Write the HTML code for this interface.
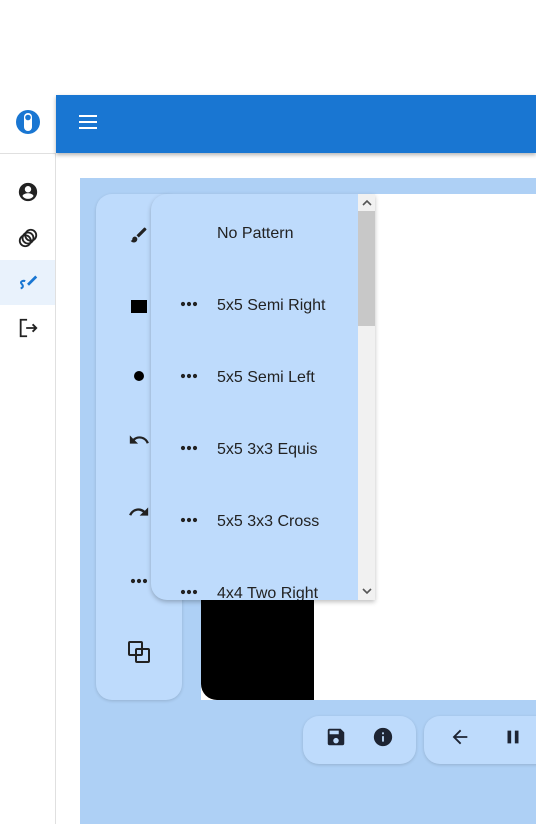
<!DOCTYPE html>
<html><head><style>
*{margin:0;padding:0;box-sizing:border-box}
body{width:536px;height:824px;overflow:hidden;background:#fff;font-family:"Liberation Sans",Arial,sans-serif;position:relative}
.a{position:absolute}
svg{display:block}
</style></head><body>
<div class="a" style="left:0;top:153px;width:56px;height:1px;background:#e0e0e0"></div>
<div class="a" style="left:55px;top:153px;width:1px;height:671px;background:#e0e0e0"></div>
<div class="a" style="left:56px;top:95px;width:480px;height:58px;background:#1976d2;box-shadow:0 2px 4px rgba(0,0,0,.3)"></div>
<svg class="a" style="left:78px;top:113px" width="20" height="18"><rect x="1" y="2" width="18" height="2" fill="#fff"/><rect x="1" y="8" width="18" height="2" fill="#fff"/><rect x="1" y="14" width="18" height="2" fill="#fff"/></svg>
<svg class="a" style="left:15px;top:109px" width="26" height="26"><circle cx="13" cy="13" r="12" fill="#1976d2"/><rect x="9" y="4" width="8" height="18" rx="4" fill="#fff"/><circle cx="13" cy="8.5" r="2.8" fill="#1976d2"/></svg>
<svg class="a" style="left:17px;top:181px" width="22" height="22" viewBox="0 0 24 24"><path fill="#222" d="M12 2a10 10 0 100 20 10 10 0 000-20zm0 3.5a3.5 3.5 0 110 7 3.5 3.5 0 010-7zM12 19.5a7.5 7.5 0 01-6-3c.03-2 4-3.1 6-3.1s5.97 1.1 6 3.1a7.5 7.5 0 01-6 3z"/></svg>
<svg class="a" style="left:17px;top:227px" width="22" height="22" viewBox="0 0 24 24" fill="none" stroke="#222" stroke-width="2"><circle cx="9" cy="15" r="6"/><circle cx="12" cy="12" r="6"/><circle cx="15" cy="9" r="6"/></svg>
<div class="a" style="left:0;top:260px;width:55px;height:45px;background:#e9f2fc"></div>
<svg class="a" style="left:17px;top:271px" width="22" height="22" viewBox="0 0 24 24" fill="none" stroke="#1976d2" stroke-width="2.2"><path d="M9 11c-3-1-6 1-4 3s2 4-1 5"/><path d="M12 15l9-9" stroke-width="3"/></svg>
<svg class="a" style="left:17px;top:317px" width="22" height="22" viewBox="0 0 24 24" fill="none" stroke="#222" stroke-width="2"><path d="M11 3H4v18h7M10 12h11M17 8l4 4-4 4"/></svg>
<div class="a" style="left:80px;top:178px;width:456px;height:646px;background:#aed0f5"></div>
<div class="a" style="left:201px;top:194px;width:335px;height:506px;background:#fff"></div>
<div class="a" style="left:201px;top:600px;width:113px;height:100px;background:#000;border-bottom-left-radius:16px"></div>
<div class="a" style="left:96px;top:194px;width:86px;height:506px;background:#bedbfc;border-radius:16px;box-shadow:0 1px 3px rgba(0,0,0,.15)"></div>
<svg class="a" style="left:129px;top:225px" width="20" height="20" viewBox="0 0 24 24"><path fill="#222" d="M7 14c-1.7 0-3 1.3-3 3 0 1.3-1.2 2-2 2 .9 1.2 2.5 2 4 2 2.2 0 4-1.8 4-4 0-1.7-1.3-3-3-3zm13.7-9.4l-1.3-1.3a1 1 0 00-1.4 0L9 12.3 11.7 15l9-9a1 1 0 000-1.4z"/></svg>
<div class="a" style="left:131px;top:300px;width:16px;height:13px;background:#000"></div>
<div class="a" style="left:134px;top:371px;width:10px;height:10px;border-radius:50%;background:#000"></div>
<svg class="a" style="left:128px;top:429px" width="22" height="22" viewBox="0 0 24 24"><path fill="#222" d="M12.5 8c-2.7 0-5 1-7 2.6L2 7v9h9l-3.6-3.6A8 8 0 0120.4 16l2.4-.8C21.3 10.9 17.3 8 12.5 8z"/></svg>
<svg class="a" style="left:128px;top:501px" width="22" height="22" viewBox="0 0 24 24"><path fill="#222" d="M18.4 10.6A10.5 10.5 0 0011.5 8C6.8 8 2.8 10.9 1.2 15.2l2.4.8a8 8 0 0112.7-3.6L12.7 16H22V7z"/></svg>
<svg class="a" style="left:130px;top:578px" width="18" height="6"><circle cx="3" cy="3" r="2.1" fill="#222"/><circle cx="9" cy="3" r="2.1" fill="#222"/><circle cx="15" cy="3" r="2.1" fill="#222"/></svg>
<svg class="a" style="left:127px;top:640px" width="24" height="24" viewBox="0 0 24 24" fill="none" stroke="#222" stroke-width="2"><rect x="2" y="2" width="13" height="13" rx="1"/><rect x="9" y="9" width="13" height="13" rx="1"/></svg>
<div class="a" style="left:151px;top:194px;width:224px;height:406px;background:#bedbfc;border-radius:16px 0 0 16px;box-shadow:0 2px 5px rgba(0,0,0,.25);overflow:hidden">
<div class="a" style="left:207px;top:0;width:17px;height:406px;background:#f1f1f1"></div>
<div class="a" style="left:207px;top:17px;width:17px;height:115px;background:#c8c8c8"></div>
<svg class="a" style="left:211px;top:5px" width="10" height="8"><path d="M1 6l4-4 4 4" fill="none" stroke="#555" stroke-width="1.6"/></svg>
<svg class="a" style="left:211px;top:393px" width="10" height="8"><path d="M1 2l4 4 4-4" fill="none" stroke="#555" stroke-width="1.6"/></svg>
<div style="font-size:16px;color:#222">
<div class="a" style="left:66px;top:31px">No Pattern</div>
<svg class="a" style="left:29px;top:107px" width="18" height="6"><circle cx="3" cy="3" r="2.1" fill="#222"/><circle cx="9" cy="3" r="2.1" fill="#222"/><circle cx="15" cy="3" r="2.1" fill="#222"/></svg><div class="a" style="left:66px;top:103px">5x5 Semi Right</div>
<svg class="a" style="left:29px;top:179px" width="18" height="6"><circle cx="3" cy="3" r="2.1" fill="#222"/><circle cx="9" cy="3" r="2.1" fill="#222"/><circle cx="15" cy="3" r="2.1" fill="#222"/></svg><div class="a" style="left:66px;top:175px">5x5 Semi Left</div>
<svg class="a" style="left:29px;top:251px" width="18" height="6"><circle cx="3" cy="3" r="2.1" fill="#222"/><circle cx="9" cy="3" r="2.1" fill="#222"/><circle cx="15" cy="3" r="2.1" fill="#222"/></svg><div class="a" style="left:66px;top:247px">5x5 3x3 Equis</div>
<svg class="a" style="left:29px;top:323px" width="18" height="6"><circle cx="3" cy="3" r="2.1" fill="#222"/><circle cx="9" cy="3" r="2.1" fill="#222"/><circle cx="15" cy="3" r="2.1" fill="#222"/></svg><div class="a" style="left:66px;top:319px">5x5 3x3 Cross</div>
<svg class="a" style="left:29px;top:395px" width="18" height="6"><circle cx="3" cy="3" r="2.1" fill="#222"/><circle cx="9" cy="3" r="2.1" fill="#222"/><circle cx="15" cy="3" r="2.1" fill="#222"/></svg><div class="a" style="left:66px;top:391px">4x4 Two Right</div>
</div></div>
<div class="a" style="left:303px;top:716px;width:113px;height:48px;background:#bedbfc;border-radius:16px;box-shadow:0 1px 3px rgba(0,0,0,.15)"></div>
<div class="a" style="left:424px;top:716px;width:130px;height:48px;background:#bedbfc;border-radius:16px;box-shadow:0 1px 3px rgba(0,0,0,.15)"></div>
<svg class="a" style="left:325px;top:726px" width="22" height="22" viewBox="0 0 24 24"><path fill="#1d2433" d="M17 3H5a2 2 0 00-2 2v14a2 2 0 002 2h14a2 2 0 002-2V7zm-5 16a3 3 0 110-6 3 3 0 010 6zm3-10H5V5h10z"/></svg>
<svg class="a" style="left:372px;top:726px" width="22" height="22" viewBox="0 0 24 24"><path fill="#1d2433" d="M12 2a10 10 0 100 20 10 10 0 000-20zm1 15h-2v-6h2zm0-8h-2V7h2z"/></svg>
<svg class="a" style="left:449px;top:726px" width="22" height="22" viewBox="0 0 24 24"><path fill="#1d2433" d="M20 11H7.8l5.6-5.6L12 4l-8 8 8 8 1.4-1.4L7.8 13H20z"/></svg>
<svg class="a" style="left:502px;top:726px" width="22" height="22" viewBox="0 0 24 24"><path fill="#1d2433" d="M6 19h4V5H6zm8-14v14h4V5z"/></svg>
</body></html>
